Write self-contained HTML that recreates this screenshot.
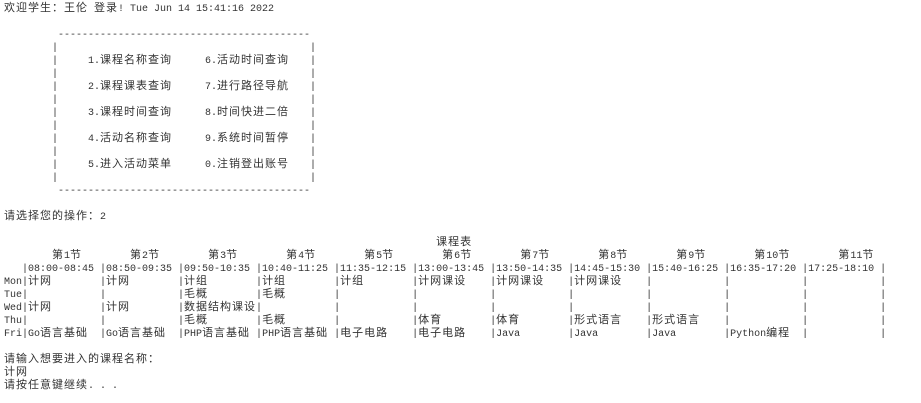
<!DOCTYPE html>
<html><head><meta charset="utf-8"><style>
html,body{margin:0;padding:0;background:#fff;width:921px;height:403px;overflow:hidden}
#p{position:absolute;left:4px;top:3px;font-family:"Liberation Mono",monospace;font-size:10px;color:#333}
.r{height:13px;line-height:13px;white-space:pre;overflow:visible}
.c{font-family:"Noto Sans CJK SC",sans-serif;font-size:11px;letter-spacing:1px;line-height:0;vertical-align:baseline}
.l{display:inline-block;width:18px;height:13px;vertical-align:top}
.x{display:inline-block;width:72px;height:13px;line-height:13px;white-space:pre;vertical-align:top}
.g1{display:inline-block;width:33px}
.g2{display:inline-block;width:21px}
</style></head><body><div id="p">
<div class="r"><span class="c">欢迎学生：王伦</span> <span class="c">登录</span>! Tue Jun 14 15:41:16 2022</div>
<div class="r"></div>
<div class="r">         ------------------------------------------</div>
<div class="r">        |                                          |</div>
<div class="r">        |     1.<span class="c">课程名称查询</span><span class="g1"></span>6.<span class="c">活动时间查询</span><span class="g2"></span>|</div>
<div class="r">        |                                          |</div>
<div class="r">        |     2.<span class="c">课程课表查询</span><span class="g1"></span>7.<span class="c">进行路径导航</span><span class="g2"></span>|</div>
<div class="r">        |                                          |</div>
<div class="r">        |     3.<span class="c">课程时间查询</span><span class="g1"></span>8.<span class="c">时间快进二倍</span><span class="g2"></span>|</div>
<div class="r">        |                                          |</div>
<div class="r">        |     4.<span class="c">活动名称查询</span><span class="g1"></span>9.<span class="c">系统时间暂停</span><span class="g2"></span>|</div>
<div class="r">        |                                          |</div>
<div class="r">        |     5.<span class="c">进入活动菜单</span><span class="g1"></span>0.<span class="c">注销登出账号</span><span class="g2"></span>|</div>
<div class="r">        |                                          |</div>
<div class="r">         ------------------------------------------</div>
<div class="r"></div>
<div class="r"><span class="c">请选择您的操作：</span>2</div>
<div class="r"></div>
<div class="r">                                                                        <span class="c">课程表</span></div>
<div class="r">        <span class="c">第</span>1<span class="c">节</span>        <span class="c">第</span>2<span class="c">节</span>        <span class="c">第</span>3<span class="c">节</span>        <span class="c">第</span>4<span class="c">节</span>        <span class="c">第</span>5<span class="c">节</span>        <span class="c">第</span>6<span class="c">节</span>        <span class="c">第</span>7<span class="c">节</span>        <span class="c">第</span>8<span class="c">节</span>        <span class="c">第</span>9<span class="c">节</span>        <span class="c">第</span>10<span class="c">节</span>        <span class="c">第</span>11<span class="c">节</span></div>
<div class="r">   |08:00-08:45 |08:50-09:35 |09:50-10:35 |10:40-11:25 |11:35-12:15 |13:00-13:45 |13:50-14:35 |14:45-15:30 |15:40-16:25 |16:35-17:20 |17:25-18:10 |</div>
<div class="r"><span class="l">Mon</span>|<span class="x"><span class="c">计网</span></span>|<span class="x"><span class="c">计网</span></span>|<span class="x"><span class="c">计组</span></span>|<span class="x"><span class="c">计组</span></span>|<span class="x"><span class="c">计组</span></span>|<span class="x"><span class="c">计网课设</span></span>|<span class="x"><span class="c">计网课设</span></span>|<span class="x"><span class="c">计网课设</span></span>|<span class="x"></span>|<span class="x"></span>|<span class="x"></span>|</div>
<div class="r"><span class="l">Tue</span>|<span class="x"></span>|<span class="x"></span>|<span class="x"><span class="c">毛概</span></span>|<span class="x"><span class="c">毛概</span></span>|<span class="x"></span>|<span class="x"></span>|<span class="x"></span>|<span class="x"></span>|<span class="x"></span>|<span class="x"></span>|<span class="x"></span>|</div>
<div class="r"><span class="l">Wed</span>|<span class="x"><span class="c">计网</span></span>|<span class="x"><span class="c">计网</span></span>|<span class="x"><span class="c">数据结构课设</span></span>|<span class="x"></span>|<span class="x"></span>|<span class="x"></span>|<span class="x"></span>|<span class="x"></span>|<span class="x"></span>|<span class="x"></span>|<span class="x"></span>|</div>
<div class="r"><span class="l">Thu</span>|<span class="x"></span>|<span class="x"></span>|<span class="x"><span class="c">毛概</span></span>|<span class="x"><span class="c">毛概</span></span>|<span class="x"></span>|<span class="x"><span class="c">体育</span></span>|<span class="x"><span class="c">体育</span></span>|<span class="x"><span class="c">形式语言</span></span>|<span class="x"><span class="c">形式语言</span></span>|<span class="x"></span>|<span class="x"></span>|</div>
<div class="r"><span class="l">Fri</span>|<span class="x">Go<span class="c">语言基础</span></span>|<span class="x">Go<span class="c">语言基础</span></span>|<span class="x">PHP<span class="c">语言基础</span></span>|<span class="x">PHP<span class="c">语言基础</span></span>|<span class="x"><span class="c">电子电路</span></span>|<span class="x"><span class="c">电子电路</span></span>|<span class="x">Java</span>|<span class="x">Java</span>|<span class="x">Java</span>|<span class="x">Python<span class="c">编程</span></span>|<span class="x"></span>|</div>
<div class="r"></div>
<div class="r"><span class="c">请输入想要进入的课程名称：</span></div>
<div class="r"><span class="c">计网</span></div>
<div class="r"><span class="c">请按任意键继续</span>. . .</div>
</div></body></html>
